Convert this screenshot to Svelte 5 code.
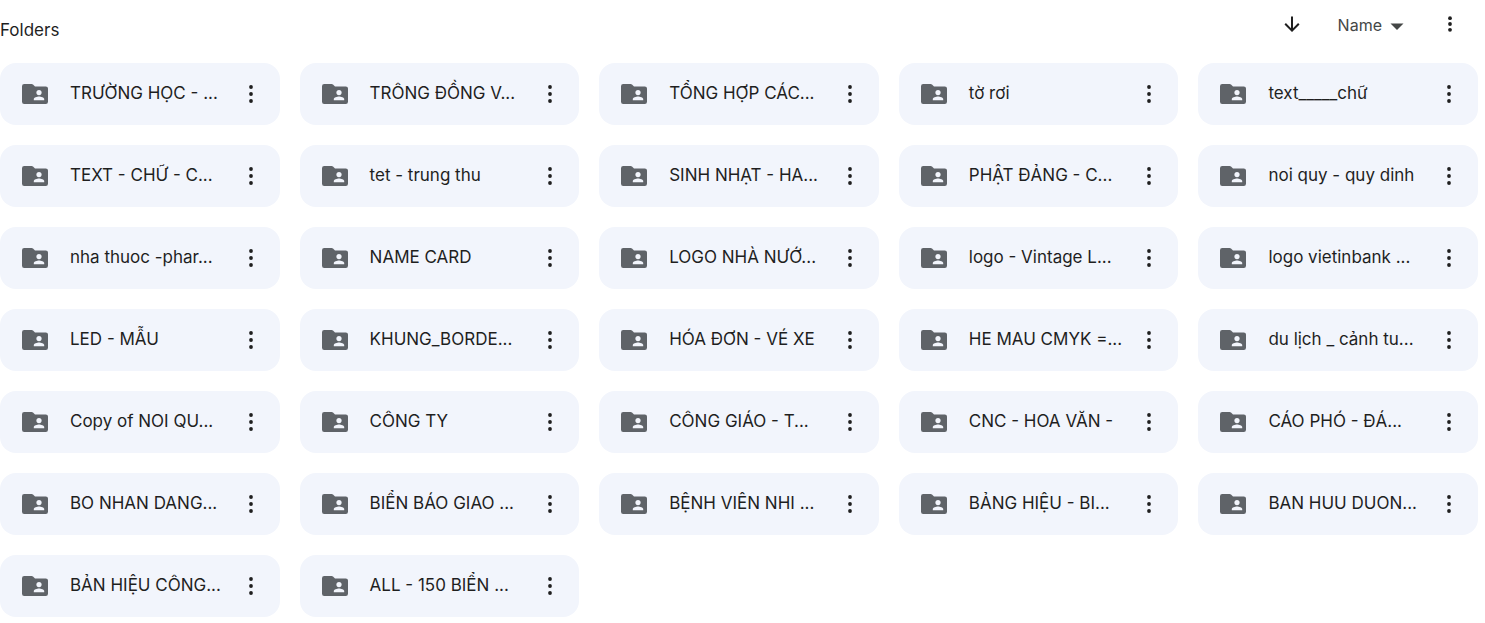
<script lang="ts">
    interface Folder {
        id: number;
        name: string;
    }

    const names = [
        "TRƯỜNG HỌC - ...", "TRÔNG ĐỒNG V...", "TỔNG HỢP CÁC...", "tờ rơi", "text_____chữ",
        "TEXT - CHỮ - C...", "tet - trung thu", "SINH NHẠT - HA...", "PHẬT ĐẢNG - C...", "noi quy - quy dinh",
        "nha thuoc -phar...", "NAME CARD", "LOGO NHÀ NƯỚ...", "logo - Vintage L...", "logo vietinbank ...",
        "LED - MẪU", "KHUNG_BORDE...", "HÓA ĐƠN - VÉ XE", "HE MAU CMYK =...", "du lịch _ cảnh tu...",
        "Copy of NOI QU...", "CÔNG TY", "CÔNG GIÁO - T...", "CNC - HOA VĂN -", "CÁO PHÓ - ĐÁ...",
        "BO NHAN DANG...", "BIỂN BÁO GIAO ...", "BỆNH VIÊN NHI ...", "BẢNG HIỆU - BI...", "BAN HUU DUON...",
        "BẢN HIỆU CÔNG...", "ALL - 150 BIỂN ...",
    ];

    let ascending = $state(false);
    const folders: Folder[] = names.map((name, id) => ({id, name}));
    const sorted = $derived(ascending ? [...folders].reverse() : folders);
</script>

{#snippet sharedFolder()}
    <svg class="folder-icon" width="26" height="20" viewBox="0 0 26 20" aria-hidden="true">
        <path fill="#5f6368" d="M2.2 0H9.6a2 2 0 0 1 1.4.6L13 2.4H23.8A2.2 2.2 0 0 1 26 4.6V17.8A2.2 2.2 0 0 1 23.8 20H2.2A2.2 2.2 0 0 1 0 17.8V2.2A2.2 2.2 0 0 1 2.2 0Z" />
        <circle cx="17" cy="8.6" r="2.6" fill="#f2f5fc" />
        <path fill="#f2f5fc" d="M11.8 16.2v-1.1c0-1.8 3.3-2.7 5.2-2.7s5.2.9 5.2 2.7v1.1Z" />
    </svg>
{/snippet}

<main>
    <header>
        <h2>Folders</h2>
        <div class="tools">
            <button class="icon-button" aria-label="Reverse sort direction" onclick={() => (ascending = !ascending)}>
                <svg width="16" height="16" viewBox="0 0 16 16" aria-hidden="true">
                    <path d="M8 0.5V14.5M1.2 7.8 8 14.6 14.8 7.8" fill="none" stroke="#1f1f1f" stroke-width="2" />
                </svg>
            </button>
            <button class="sort" aria-haspopup="menu">
                <span>Name</span>
                <svg width="14" height="7" viewBox="0 0 14 7" aria-hidden="true">
                    <path d="M0.5 0.5h13L7 7Z" fill="#444746" />
                </svg>
            </button>
            <button class="icon-button" aria-label="View options">
                <svg width="6" height="16" viewBox="0 0 6 16" fill="#1f1f1f" aria-hidden="true">
                    <circle cx="3" cy="2.2" r="1.9" />
                    <circle cx="3" cy="8" r="1.9" />
                    <circle cx="3" cy="13.8" r="1.9" />
                </svg>
            </button>
        </div>
    </header>

    <ul>
        {#each sorted as folder (folder.id)}
            <li>
                {@render sharedFolder()}
                <span class="name">{folder.name}</span>
                <button class="more" aria-label="More actions for {folder.name}">
                    <svg width="6" height="18" viewBox="0 0 6 18" fill="#1f1f1f" aria-hidden="true">
                        <circle cx="3" cy="2" r="1.9" />
                        <circle cx="3" cy="9" r="1.9" />
                        <circle cx="3" cy="16" r="1.9" />
                    </svg>
                </button>
            </li>
        {/each}
    </ul>
</main>

<style>
:global(body) {
    margin: 0;
    background: #fff;
}

main {
    padding-right: 7px;
    color: #1f1f1f;
    font-family: Inter, Roboto, "Noto Sans", sans-serif;
    font-size: 17px;
}

header {
    display: flex;
    align-items: center;
    justify-content: space-between;
    height: 48px;
    margin-bottom: 15px;
}

h2 {
    margin: 0;
    padding-top: 12px;
    font-size: 17px;
    font-weight: 400;
    line-height: 24px;
}

.tools {
    display: flex;
    align-items: center;
    gap: 20px;
    padding-right: 8px;
}

button {
    display: flex;
    align-items: center;
    justify-content: center;
    padding: 0;
    border: 0;
    background: none;
    color: inherit;
    font: inherit;
    cursor: pointer;
}

.icon-button {
    width: 40px;
    height: 40px;
    border-radius: 20px;
}

.sort {
    gap: 8px;
    height: 40px;
    padding: 2px 6px 0;
    color: #444746;
    font-size: 16px;
}

.sort svg {
    margin-top: 3px;
}

ul {
    display: grid;
    grid-template-columns: repeat(5, minmax(0, 1fr));
    gap: 20px;
    margin: 0;
    padding: 0;
    list-style: none;
}

li {
    display: flex;
    align-items: center;
    height: 62px;
    padding: 0 14px 0 22px;
    border-radius: 16px;
    background: #f2f5fc;
    box-sizing: border-box;
}

.folder-icon {
    flex: none;
    margin-right: 22px;
}

.name {
    flex: 1;
    min-width: 0;
    padding-bottom: 2px;
    line-height: 24px;
    white-space: nowrap;
}

.more {
    flex: none;
    width: 30px;
    height: 40px;
}
</style>
